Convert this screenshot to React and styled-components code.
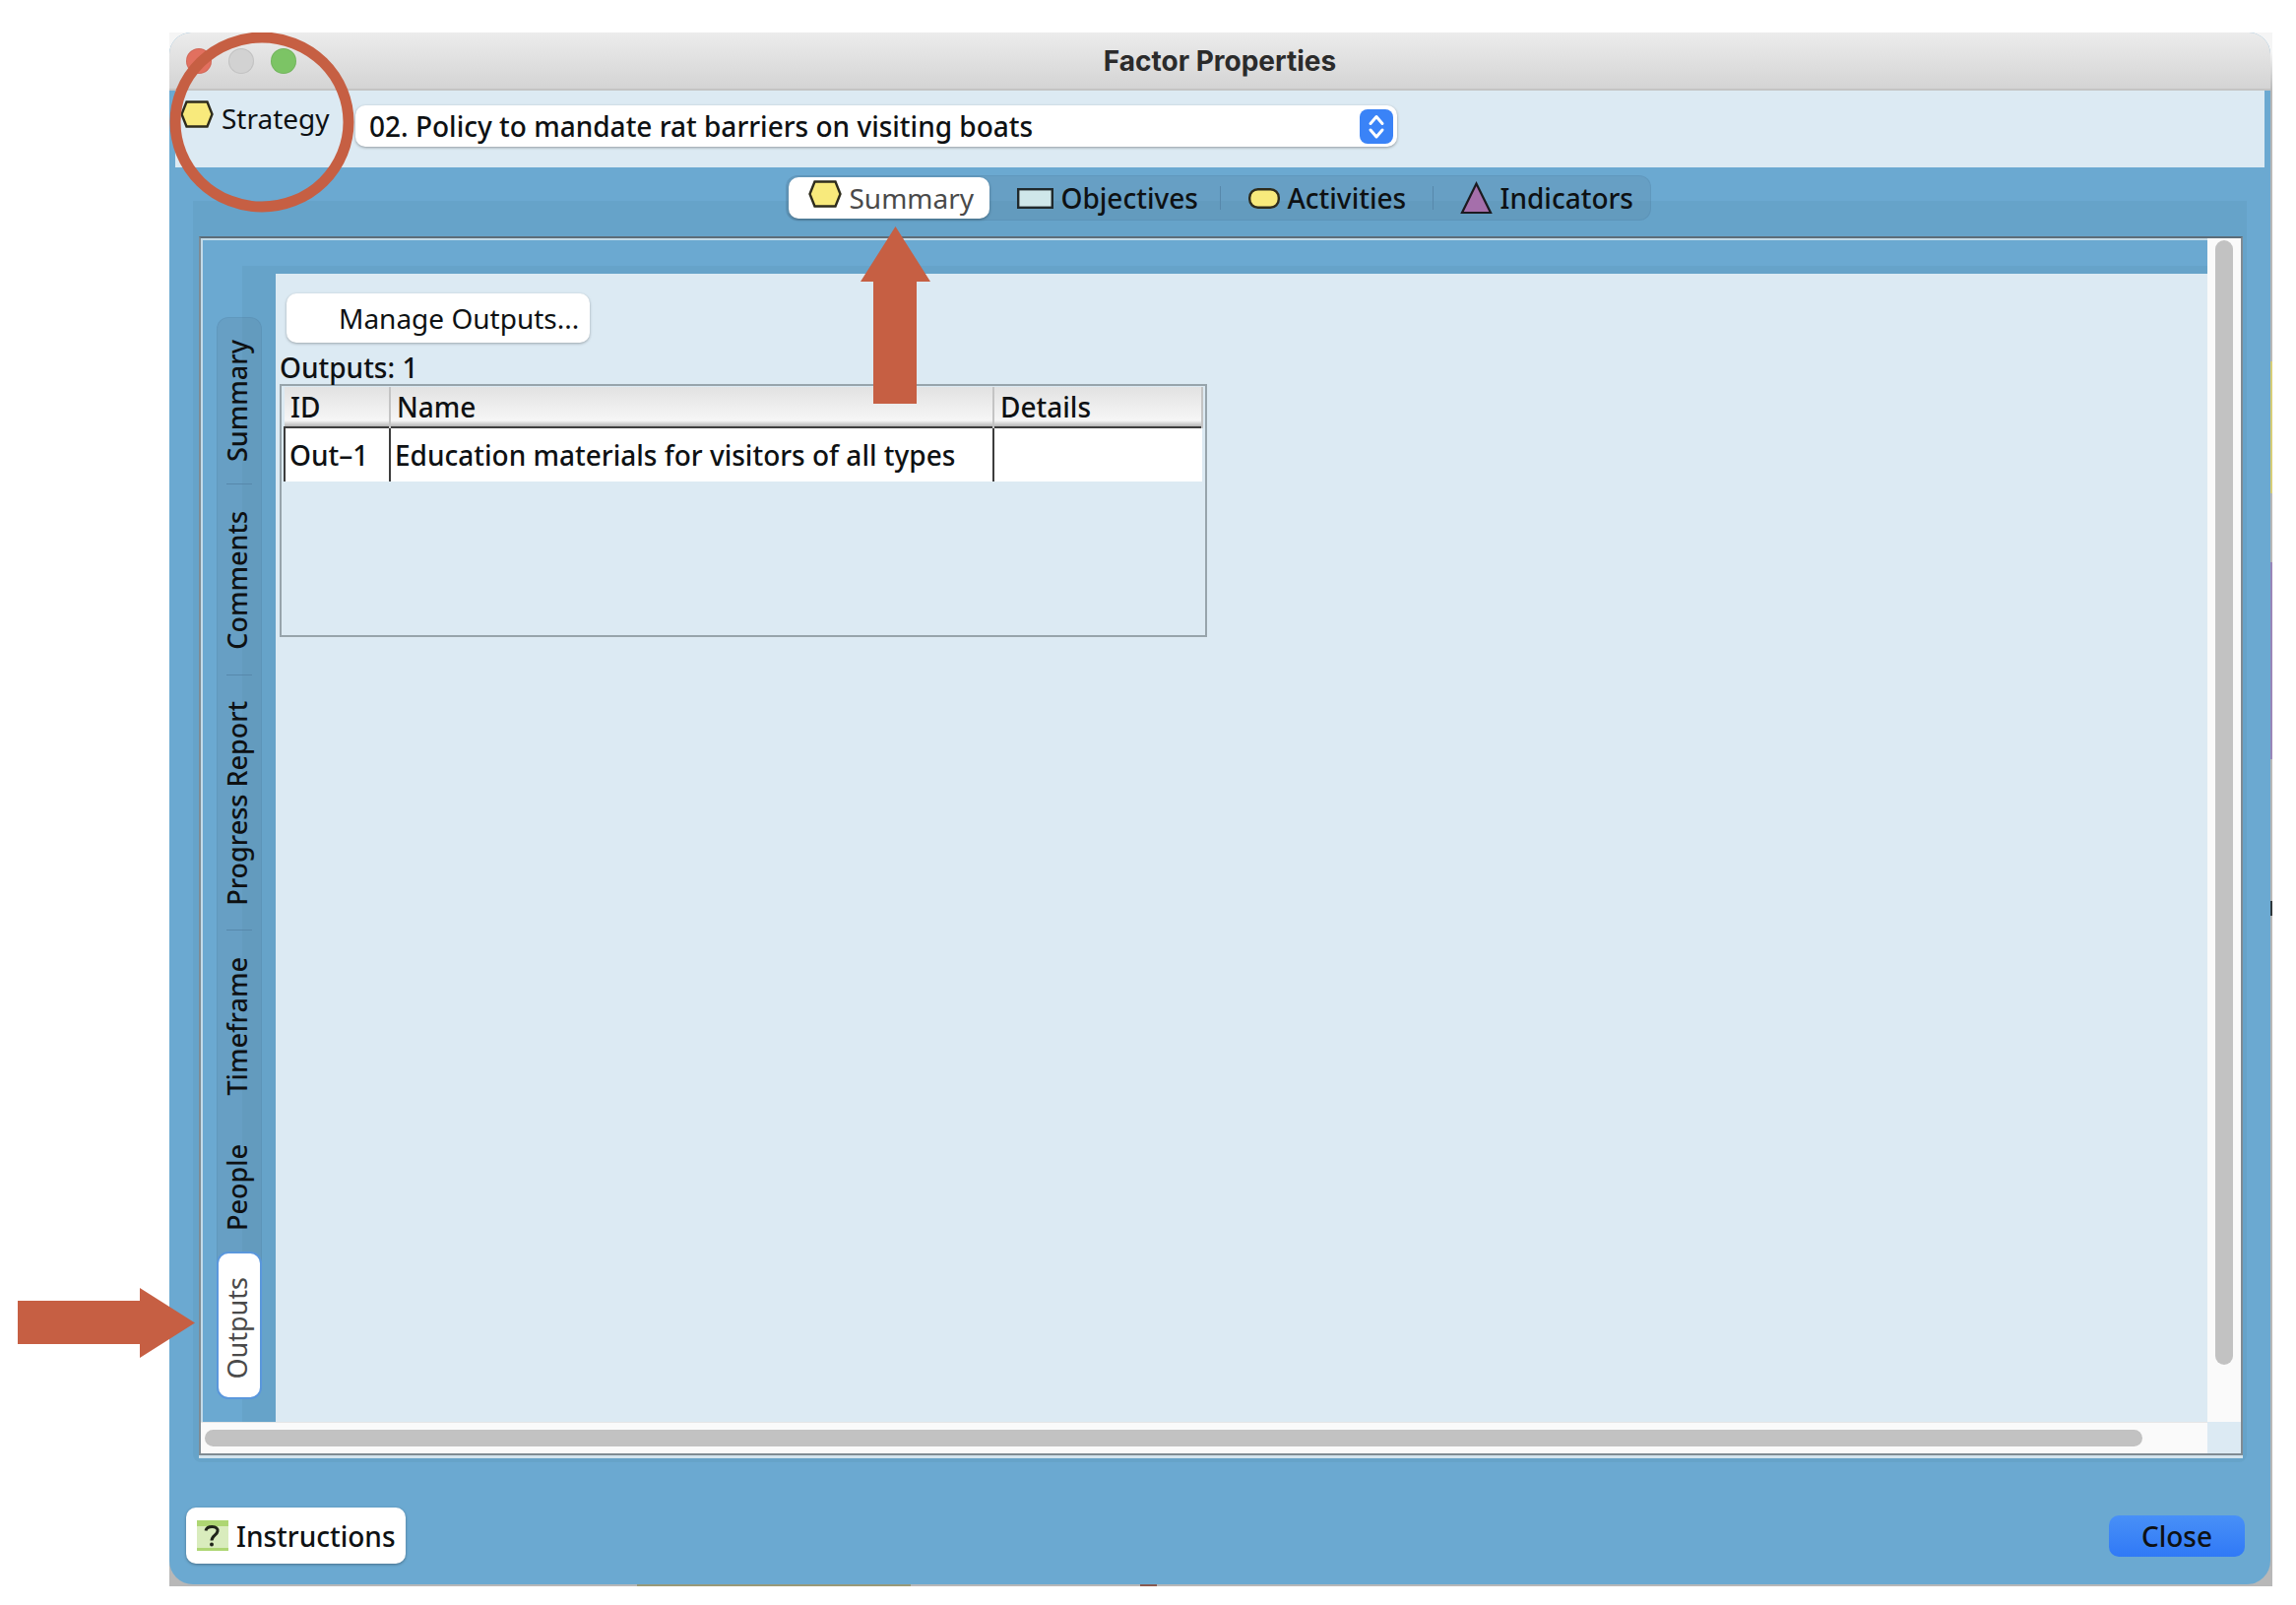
import React from "react";
import styled, { createGlobalStyle, css } from "styled-components";

const GlobalStyle = createGlobalStyle`
    * {
        box-sizing: border-box;
    }

    body {
        margin: 0;
        background: #ffffff;
        color: #0e1113;
        font-family: "Noto Sans", "Open Sans", sans-serif;
        font-size: 28px;
        line-height: 36px;
    }

    button, select {
        margin: 0;
        border: none;
        color: inherit;
        font: inherit;
    }
`;

const Page = styled.div`
    display: flex;
    min-height: 100vh;
    padding: 33px 24px 19px 172px;
`;

// the desktop behind the dialog, only a sliver of it shows at the edges
const Backdrop = styled.div`
    display: flex;
    flex: 1;
    min-width: 0;
    padding: 0 2px 2px 0;
    background:
        linear-gradient(#d8ce78, #d8ce78) right 334px / 2px 134px no-repeat,
        linear-gradient(#9a86b8, #9a86b8) right 538px / 2px 200px no-repeat,
        linear-gradient(#30383c, #30383c) right 882px / 2px 15px no-repeat,
        linear-gradient(#9a9a78, #9a9a78) 475px bottom / 278px 2px no-repeat,
        linear-gradient(#8a5a50, #8a5a50) 986px bottom / 17px 2px no-repeat,
        linear-gradient(#f5f5f5 20px, #b8b8b8 60px);
`;

const Window = styled.main`
    position: relative;
    display: flex;
    flex: 1;
    flex-direction: column;
    min-width: 0;
    background: #6ba9d1;
    border-radius: 22px 22px 24px 24px;
`;

const TitleBar = styled.header`
    display: grid;
    grid-template-columns: 1fr auto 1fr;
    align-items: center;
    height: 59px;
    padding: 0 17px;
    background: linear-gradient(#ececec, #d4d4d4);
    border-bottom: 2px solid #c4c4c4;
    border-radius: 22px 22px 0 0;
`;

const Lights = styled.div`
    display: flex;
    gap: 17px;
`;

const Light = styled.button`
    width: 26px;
    height: 26px;
    padding: 0;
    border-radius: 50%;
    background: ${props => props.$color};
    box-shadow: inset 0 0 0 1px rgba(0, 0, 0, 0.08);
`;

const Title = styled.h1`
    margin: 0;
    color: #2b2b2b;
    font-family: Inter, "Liberation Sans", sans-serif;
    font-size: 28px;
    font-weight: 700;
    line-height: 36px;
`;

const FactorPanel = styled.section`
    display: flex;
    align-items: flex-start;
    height: 78px;
    margin: 0 6px;
    padding: 10px 5px;
    background: #dceaf3;
`;

const FactorLabel = styled.label`
    display: flex;
    gap: 8px;
    width: 178px;
`;

const SelectBox = styled.div`
    display: grid;
    align-items: center;
    width: 1058px;
    margin-top: 5px;
`;

const FactorSelect = styled.select`
    grid-area: 1 / 1;
    width: 100%;
    height: 42px;
    padding: 0 44px 0 14px;
    appearance: none;
    background: #ffffff;
    border-radius: 10px;
    box-shadow: 0 1px 3px rgba(0, 0, 0, 0.35);
    font-weight: 500;
`;

const SelectArrows = styled.svg`
    grid-area: 1 / 1;
    justify-self: end;
    margin-right: 4px;
    pointer-events: none;
`;

const TabPane = styled.section`
    display: flex;
    flex: 1;
    flex-direction: column;
    margin: 8px 24px 0;
    padding-bottom: 7px;
    background: linear-gradient(transparent 26px, #66a3c9 26px);
    border-radius: 0 0 8px 8px;
`;

const TabRow = styled.div`
    display: flex;
    justify-content: center;
    height: 62px;
    padding-right: 4px;
`;

const TabBar = styled.nav`
    display: flex;
    align-items: center;
    height: 46px;
    padding: 0 2px;
    background: rgba(90, 130, 160, 0.25);
    border: 1px solid rgba(60, 110, 150, 0.15);
    border-radius: 12px;
`;

const Tab = styled.button`
    position: relative;
    display: flex;
    align-items: center;
    gap: 8px;
    height: 42px;
    width: ${props => props.$width}px;
    padding: 0 0 0 ${props => props.$inset}px;
    background: none;
    font-weight: 500;
    white-space: nowrap;

    ${props => props.$divided && css`
        background: linear-gradient(#5788ab, #5788ab) right center / 1px 24px no-repeat;
    `}

    ${props => props.$selected && css`
        background: #ffffff;
        border-radius: 10px;
        box-shadow: 0 1px 3px rgba(0, 0, 0, 0.35);
        color: #4a4a4a;
        font-weight: 400;

        > svg:first-child {
            margin-bottom: 8px;
        }
    `}
`;

const ScrollFrame = styled.div`
    display: grid;
    flex: 1;
    grid-template-columns: minmax(0, 1fr) 34px;
    grid-template-rows: 1fr 32px;
    margin: 0 4px 0 6px;
    background: #dceaf3;
    border: 2px solid #7f8b93;
    border-top-color: #5d6d78;
    box-shadow: 0 3px 0 #d3e4ee;
`;

const View = styled.div`
    display: flex;
    background: #6ba9d1;
    border: 2px solid #c3dbe9;
    border-right: none;
    border-bottom: none;
`;

const SideTabs = styled.nav`
    display: flex;
    flex-direction: column;
    width: 74px;
    padding: 78px 14px 22px;
    background: linear-gradient(#66a3c9, #66a3c9) 40px 26px no-repeat;
`;

const SideBar = styled.div`
    display: flex;
    flex-direction: column;
    width: 46px;
    padding: 0 1px;
    background: rgba(90, 130, 160, 0.25);
    border: 1px solid rgba(60, 110, 150, 0.15);
    border-radius: 12px;
`;

const SideTab = styled.button`
    position: relative;
    display: flex;
    align-items: center;
    justify-content: center;
    width: 42px;
    height: ${props => props.$height}px;
    padding: 0 4px 0 0;
    background: none;
    font-size: 27px;
    font-weight: 500;

    ${props => props.$divided && css`
        background: linear-gradient(#5788ab, #5788ab) center bottom / 26px 1px no-repeat;
    `}

    ${props => props.$selected && css`
        padding-top: 6px;
        background: #ffffff;
        border-radius: 10px;
        box-shadow: 0 0 0 2px #5a97dc;
        color: #4a4a4a;
        font-weight: 400;
    `}
`;

const SideText = styled.span`
    writing-mode: vertical-rl;
    transform: rotate(180deg);
    white-space: nowrap;
`;

const OutputsArea = styled.div`
    flex: 1;
    min-width: 0;
    padding-top: 34px;
    background: linear-gradient(#66a3c9, #66a3c9) 0 26px / 100% 8px no-repeat;
`;

const OutputsPanel = styled.section`
    height: 100%;
    padding: 20px 4px;
    background: #dceaf3;
`;

const ManageButton = styled.button`
    display: block;
    width: 308px;
    height: 50px;
    margin-left: 7px;
    padding: 0 0 0 53px;
    background: #ffffff;
    border-radius: 10px;
    box-shadow: 0 1px 3px rgba(0, 0, 0, 0.3);
    text-align: left;
    white-space: nowrap;
`;

const OutputsCount = styled.p`
    margin: 8px 0 0;
    font-weight: 500;
    line-height: 34px;
`;

const TableFrame = styled.div`
    width: 942px;
    height: 257px;
    padding: 1px 2px;
    border: 2px solid #97a4ab;
`;

const OutputsTable = styled.table`
    width: 100%;
    table-layout: fixed;
    border-collapse: collapse;
    font-weight: 500;
    text-align: left;
`;

const HeadCell = styled.th`
    width: ${props => props.$width};
    height: 41px;
    padding: 0 6px;
    background: linear-gradient(#e2e2e2, #f6f6f6 85%, #b4b4b4);
    border-right: 2px solid #c4c4c4;
    font-weight: 500;
`;

const Cell = styled.td`
    height: 55px;
    padding: 0 4px;
    background: #ffffff;
    border-top: 2px solid #3d3d3d;
    border-left: 2px solid #3d3d3d;
    white-space: nowrap;
`;

const VerticalTrack = styled.div`
    padding: 2px 8px 58px;
    background: #fafafa;
`;

const HorizontalTrack = styled.div`
    grid-row: 2;
    padding: 7px 66px 7px 4px;
    background: #fafafa;
    border-top: 1px solid #e6e6e6;
`;

const Thumb = styled.div`
    height: 100%;
    background: #c2c2c2;
    border-radius: 9px;
`;

const Footer = styled.footer`
    display: flex;
    align-items: center;
    justify-content: space-between;
    height: 124px;
    padding: 25px 26px 0 17px;
    font-weight: 500;
`;

const InstructionsButton = styled.button`
    display: flex;
    align-items: center;
    gap: 8px;
    width: 223px;
    height: 57px;
    padding: 0 0 0 11px;
    background: #ffffff;
    border-radius: 10px;
    box-shadow: 0 1px 3px rgba(0, 0, 0, 0.35);
`;

const CloseButton = styled.button`
    width: 138px;
    height: 42px;
    background: linear-gradient(#4890f7, #3079f6);
    border-radius: 10px;
`;

const CircleMark = styled.svg`
    position: absolute;
    top: 0;
    left: 0;
    pointer-events: none;
`;

const UpArrow = styled.svg`
    position: absolute;
    top: 50px;
    left: 73px;
    z-index: 1;
    pointer-events: none;
`;

const RightArrow = styled.svg`
    position: absolute;
    top: 35px;
    right: 66px;
    z-index: 1;
    pointer-events: none;
`;

const HexagonIcon = () => (
    <svg width="34" height="28" viewBox="0 0 34 28" aria-hidden="true">
        <path d="M6.500 1.500h21L32.500 14l-5 12.500h-21L1.500 14z" fill="#f8ea7c" stroke="#2e2c1c" strokeWidth="2.4" />
    </svg>
);

const RectangleIcon = () => (
    <svg width="37" height="21" viewBox="0 0 37 21" aria-hidden="true">
        <rect x="1.2" y="1.2" width="34.6" height="18.6" fill="#cfe7ea" stroke="#20292c" strokeWidth="2.4" />
    </svg>
);

const PillIcon = () => (
    <svg width="32" height="21" viewBox="0 0 32 21" aria-hidden="true">
        <rect x="1.2" y="1.2" width="29.6" height="18.6" rx="8.5" fill="#f8ea7c" stroke="#2e2c1c" strokeWidth="2.4" />
    </svg>
);

const TriangleIcon = () => (
    <svg width="33" height="34" viewBox="0 0 33 34" aria-hidden="true">
        <path d="M16.500 2.500L31 32H2z" fill="#a56fab" stroke="#1c1a20" strokeWidth="2.2" />
    </svg>
);

const HelpIcon = () => (
    <svg width="32" height="31" viewBox="0 0 32 31" aria-hidden="true">
        <rect width="32" height="31" fill="#d9ecbd" />
        <rect width="32" height="6" fill="#aed673" />
        <rect y="28" width="32" height="3" fill="#aed673" />
        <path d="M9 10.500C9.500 8 12 6.500 15.500 6.500c4 0 6 2 5.500 4.500-.5 4-6 4.500-6 9.500" fill="none" stroke="#20241a" strokeWidth="3" />
        <circle cx="15" cy="24.500" r="2" fill="#20241a" />
    </svg>
);

const tabs = [
    { name: "Summary", Icon: HexagonIcon, width: 204, inset: 20, selected: true },
    { name: "Objectives", Icon: RectangleIcon, width: 235, inset: 28, divided: true },
    { name: "Activities", Icon: PillIcon, width: 216, inset: 28, divided: true },
    { name: "Indicators", Icon: TriangleIcon, width: 218, inset: 27 },
];

const sideTabs = [
    { name: "Summary", height: 169, divided: true },
    { name: "Comments", height: 194, divided: true },
    { name: "Progress Report", height: 259, divided: true },
    { name: "Timeframe", height: 194 },
    { name: "People", height: 134 },
    { name: "Outputs", height: 146, selected: true },
];

const App = () => {
    return (
        <Page>
            <GlobalStyle />
            <Backdrop>
                <Window>
                    <TitleBar>
                        <Lights>
                            <Light $color="#e2705f" aria-label="Close window" />
                            <Light $color="#d2d2d2" aria-label="Minimize window" />
                            <Light $color="#7cc465" aria-label="Zoom window" />
                        </Lights>
                        <Title>Factor Properties</Title>
                    </TitleBar>
                    <FactorPanel>
                        <FactorLabel htmlFor="factor">
                            <HexagonIcon />
                            Strategy
                        </FactorLabel>
                        <SelectBox>
                            <FactorSelect id="factor">
                                <option>02. Policy to mandate rat barriers on visiting boats</option>
                            </FactorSelect>
                            <SelectArrows width="34" height="35" viewBox="0 0 34 35">
                                <rect width="34" height="35" rx="8" fill="#3a83f7" />
                                <path d="M11 14.500l6-7 6 7M11 21l6 7 6-7" fill="none" stroke="#fff" strokeWidth="3" strokeLinecap="round" strokeLinejoin="round" />
                            </SelectArrows>
                        </SelectBox>
                    </FactorPanel>
                    <TabPane>
                        <TabRow>
                            <TabBar>
                                {tabs.map(({ name, Icon, width, inset, selected, divided }) => (
                                    <Tab key={name} $width={width} $inset={inset} $selected={selected} $divided={divided}>
                                        <Icon />
                                        {name}
                                        {selected && (
                                            <UpArrow width="71" height="180" viewBox="0 0 71 180">
                                                <path d="M35.500 0L71 56H57v124H13V56H0z" fill="#c65f43" />
                                            </UpArrow>
                                        )}
                                    </Tab>
                                ))}
                            </TabBar>
                        </TabRow>
                        <ScrollFrame>
                            <View>
                                <SideTabs>
                                    <SideBar>
                                        {sideTabs.map(({ name, height, selected, divided }) => (
                                            <SideTab key={name} $height={height} $selected={selected} $divided={divided}>
                                                <SideText>{name}</SideText>
                                                {selected && (
                                                    <RightArrow width="180" height="71" viewBox="0 0 180 71">
                                                        <path d="M180 35.500L124 71V57H0V13h124V0z" fill="#c65f43" />
                                                    </RightArrow>
                                                )}
                                            </SideTab>
                                        ))}
                                    </SideBar>
                                </SideTabs>
                                <OutputsArea>
                                    <OutputsPanel>
                                        <ManageButton>Manage Outputs...</ManageButton>
                                        <OutputsCount>Outputs: 1</OutputsCount>
                                        <TableFrame>
                                            <OutputsTable>
                                                <thead>
                                                    <tr>
                                                        <HeadCell $width="107px">ID</HeadCell>
                                                        <HeadCell $width="613px">Name</HeadCell>
                                                        <HeadCell>Details</HeadCell>
                                                    </tr>
                                                </thead>
                                                <tbody>
                                                    <tr>
                                                        <Cell>Out–1</Cell>
                                                        <Cell>Education materials for visitors of all types</Cell>
                                                        <Cell />
                                                    </tr>
                                                </tbody>
                                            </OutputsTable>
                                        </TableFrame>
                                    </OutputsPanel>
                                </OutputsArea>
                            </View>
                            <VerticalTrack>
                                <Thumb />
                            </VerticalTrack>
                            <HorizontalTrack>
                                <Thumb />
                            </HorizontalTrack>
                        </ScrollFrame>
                    </TabPane>
                    <Footer>
                        <InstructionsButton>
                            <HelpIcon />
                            Instructions
                        </InstructionsButton>
                        <CloseButton>Close</CloseButton>
                    </Footer>
                    <CircleMark width="188" height="184" viewBox="0 0 188 184">
                        <ellipse cx="94" cy="91" rx="88" ry="86" fill="none" stroke="#c65f43" strokeWidth="11" />
                    </CircleMark>
                </Window>
            </Backdrop>
        </Page>
    );
};

export default App;
